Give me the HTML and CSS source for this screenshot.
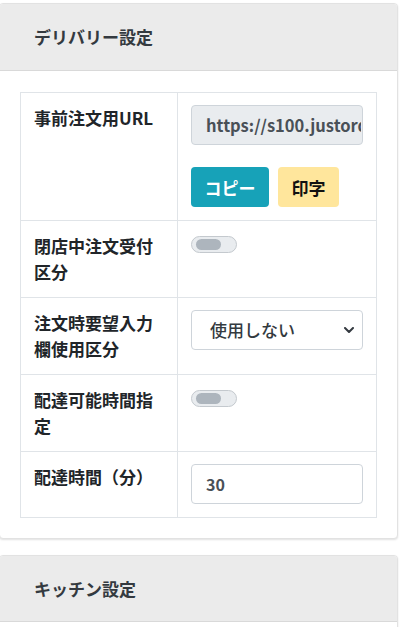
FILE: index.html
```html
<!DOCTYPE html>
<html lang="ja">
<head>
<meta charset="utf-8">
<title>デリバリー設定</title>
<link rel="stylesheet" href="styles.css">
</head>
<body>
<div class="card">
  <div class="card-header">デリバリー設定</div>
  <div class="card-body">
    <table class="settings">
      <tr>
        <th>事前注文用URL</th>
        <td>
          <input class="form-control readonly url" type="text" readonly value="https://s100.justorder.jp/delivery">
          <div class="btn-row">
            <button class="btn btn-info">コピー</button>
            <button class="btn btn-warning">印字</button>
          </div>
        </td>
      </tr>
      <tr>
        <th>閉店中注文受付区分</th>
        <td><span class="switch"><span class="knob"></span></span></td>
      </tr>
      <tr>
        <th>注文時要望入力欄使用区分</th>
        <td>
          <div class="select">
            <span>使用しない</span>
            <svg class="chev" width="10" height="6" viewBox="0 0 10 6"><path d="M1 1l4 4 4-4" fill="none" stroke="#343a40" stroke-width="2" stroke-linecap="round" stroke-linejoin="round"/></svg>
          </div>
        </td>
      </tr>
      <tr>
        <th>配達可能時間指定</th>
        <td><span class="switch"><span class="knob"></span></span></td>
      </tr>
      <tr>
        <th>配達時間（分）</th>
        <td><input class="form-control" type="text" value="30"></td>
      </tr>
    </table>
  </div>
</div>
<div class="card">
  <div class="card-header">キッチン設定</div>
  <div class="card-body">
    <table class="settings">
      <tr><th>&nbsp;</th><td>&nbsp;</td></tr>
    </table>
  </div>
</div>
</body>
</html>
```
FILE: styles.css
```css
html, body {
  margin: 0;
  padding: 0;
  background: #ffffff;
}
body {
  font-family: "Noto Sans CJK JP", "Noto Sans", sans-serif;
  font-size: 17px;
  line-height: 25.5px;
  color: #212529;
  padding-top: 3px;
  width: 400px;
  overflow: hidden;
}
.card {
  box-sizing: border-box;
  width: 399px;
  margin: 0 0 16px -1px;
  border: 1px solid #e2e2e2;
  border-radius: 4px;
  background: #fff;
  box-shadow: 0 1px 2px rgba(0, 0, 0, 0.12);
  overflow: hidden;
}
.card-header {
  background: #ebebeb;
  border-bottom: 1px solid #d9d9d9;
  padding: 20px 33px 20px 34px;
  font-weight: 700;
  color: #343a40;
}
.card-body {
  padding: 21px 20px 20px 20px;
}
.settings {
  width: 357px;
  border-collapse: collapse;
  table-layout: fixed;
}
.settings th,
.settings td {
  border: 1px solid #e0e4e8;
  padding: 12.5px 13px;
  vertical-align: top;
  text-align: left;
}
.settings th {
  width: 130px;
  font-weight: 700;
}
.form-control {
  display: block;
  box-sizing: border-box;
  width: 100%;
  height: 40px;
  margin: 0;
  border: 1px solid #ced4da;
  border-radius: 4px;
  padding: 0 14px;
  font-family: inherit;
  font-weight: 700;
  font-size: 16px;
  color: #495057;
  background: #fff;
  outline: none;
}
.url {
  padding-right: 1px;
  font-size: 16.5px;
}
.readonly {
  background: #e9ecef;
}
.select {
  box-sizing: border-box;
  height: 40px;
  border: 1px solid #ced4da;
  border-radius: 4px;
  display: flex;
  align-items: center;
  justify-content: space-between;
  padding: 0 8px 0 18px;
  font-weight: 500;
  font-size: 17px;
  color: #343a40;
  background: #fff;
}
.chev {
  flex: none;
}
.btn-row {
  display: flex;
  gap: 9px;
  margin-top: 22px;
}
.btn {
  height: 40px;
  padding: 0 13.5px;
  border: none;
  border-radius: 4px;
  font-family: inherit;
  font-size: 17px;
  font-weight: 700;
}
.btn-info {
  background: #17a2b8;
  color: #fff;
}
.btn-warning {
  background: #ffe69c;
  color: #111;
}
.switch {
  display: flex;
  align-items: center;
  box-sizing: border-box;
  width: 46px;
  height: 17px;
  margin-top: 3px;
  border: 1px solid #c4c9ce;
  border-radius: 9px;
  background: #e9ecef;
  padding-left: 4px;
}
.knob {
  display: block;
  width: 25px;
  height: 11px;
  border-radius: 6px;
  background: #adb5bd;
}
```
